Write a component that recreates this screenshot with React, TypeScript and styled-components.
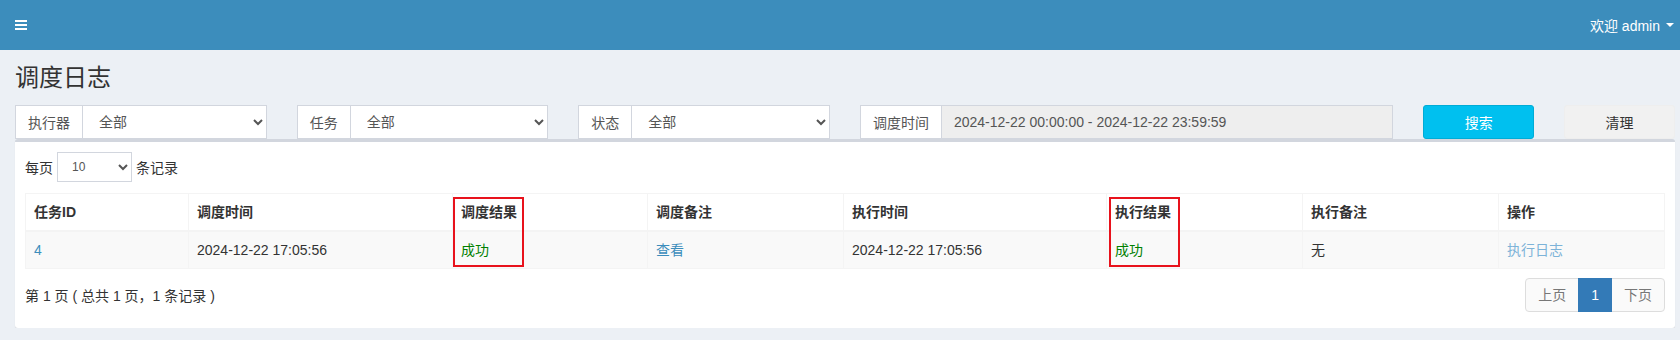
import React from 'react';
import styled, { createGlobalStyle } from 'styled-components';

const GlobalStyle = createGlobalStyle`
    * {
        box-sizing: border-box;
    }
    body {
        margin: 0;
        background: #ecf0f5;
        font-family: "Liberation Sans", "Noto Sans CJK SC", sans-serif;
        font-size: 14px;
        color: #333;
    }
`;

const Navbar = styled.header`
    height: 50px;
    background: #3c8dbc;
    display: flex;
    align-items: center;
    justify-content: space-between;
    padding: 0 6px 0 15px;
    color: #fff;
`;

const UserMenu = styled.div`
    display: flex;
    align-items: center;
    gap: 6px;
    font-size: 14px;
    margin-top: -1px;
`;

const Caret = styled.span`
    width: 0;
    height: 0;
    border-left: 4px solid transparent;
    border-right: 4px solid transparent;
    border-top: 4px solid #fff;
`;

const ContentHeader = styled.div`
    padding: 15px 15px 0;
`;

const Title = styled.h1`
    margin: 0;
    font-size: 24px;
    line-height: 25px;
    font-weight: 400;
    color: #333;
`;

const Content = styled.section`
    padding: 15px 5px 0 15px;
`;

const FilterRow = styled.div`
    display: flex;
    margin: 0 -15px;
`;

const Col = styled.div<{ $span: number }>`
    width: ${(p) => (p.$span / 12) * 100}%;
    padding: 0 15px;
`;

const InputGroup = styled.div`
    display: flex;
    height: 34px;
`;

const Addon = styled.span`
    display: flex;
    align-items: center;
    padding: 6px 12px;
    border: 1px solid #d2d6de;
    background: #fff;
    color: #555;
    white-space: nowrap;
`;

const Select = styled.select`
    flex: 1;
    min-width: 0;
    height: 34px;
    padding: 6px 8px 6px 12px;
    border: 1px solid #d2d6de;
    border-left: 0;
    border-radius: 0;
    background: #fff;
    color: #555;
    font-family: inherit;
    font-size: 14px;
    outline: none;
`;

const TimeInput = styled.input`
    flex: 1;
    min-width: 0;
    height: 34px;
    padding: 6px 12px;
    border: 1px solid #d2d6de;
    border-left: 0;
    background: #eee;
    color: #555;
    font-family: inherit;
    font-size: 14px;
    outline: none;
`;

const Button = styled.button<{ $primary?: boolean }>`
    width: 100%;
    height: 34px;
    border-radius: 3px;
    border: 1px solid ${(p) => (p.$primary ? '#00acd6' : '#eee')};
    background: ${(p) => (p.$primary ? '#00c0ef' : '#f1f1f1')};
    color: ${(p) => (p.$primary ? '#fff' : '#333')};
    font-family: inherit;
    font-size: 14px;
`;

const Box = styled.div`
    background: #fff;
    border-top: 3px solid #d2d6de;
    border-radius: 3px;
    box-shadow: 0 1px 1px rgba(0, 0, 0, 0.1);
`;

const BoxBody = styled.div`
    padding: 10px;
`;

const LengthRow = styled.div`
    display: flex;
    align-items: center;
    gap: 4px;
`;

const SmallSelect = styled.select`
    width: 75px;
    height: 30px;
    padding: 5px 10px;
    border: 1px solid #d2d6de;
    border-radius: 0;
    background: #fff;
    color: #555;
    font-family: inherit;
    font-size: 12px;
    outline: none;
`;

const Table = styled.table`
    width: 100%;
    margin-top: 11px;
    border-collapse: collapse;
    table-layout: fixed;
    border: 1px solid #f4f4f4;
`;

const Th = styled.th`
    position: relative;
    text-align: left;
    padding: 8px;
    line-height: 20px;
    font-weight: 700;
    color: #333;
    border: 1px solid #f4f4f4;
    border-bottom-width: 2px;
`;

const Td = styled.td`
    padding: 8px;
    line-height: 20px;
    background: #f9f9f9;
    border: 1px solid #f4f4f4;
`;

const Link = styled.a<{ $faded?: boolean }>`
    color: ${(p) => (p.$faded ? '#7db3d8' : '#3c8dbc')};
    text-decoration: none;
`;

const Success = styled.span`
    color: #008000;
`;

const Highlight = styled.span<{ $left: number }>`
    position: absolute;
    top: 3px;
    left: ${(p) => p.$left}px;
    width: 71px;
    height: 70px;
    border: 2px solid #e8121c;
    pointer-events: none;
`;

const Footer = styled.div`
    display: flex;
    align-items: center;
    justify-content: space-between;
    margin-top: 9px;
    margin-bottom: 6px;
`;

const Pagination = styled.ul`
    display: flex;
    margin: 0;
    padding: 0;
    list-style: none;
`;

const PageItem = styled.li<{ $active?: boolean }>`
    padding: 6px 12px;
    line-height: 20px;
    margin-left: -1px;
    border: 1px solid ${(p) => (p.$active ? '#337ab7' : '#ddd')};
    background: ${(p) => (p.$active ? '#337ab7' : '#fafafa')};
    color: ${(p) => (p.$active ? '#fff' : '#777')};
    position: ${(p) => (p.$active ? 'relative' : 'static')};

    &:first-child {
        margin-left: 0;
        border-radius: 4px 0 0 4px;
    }
    &:last-child {
        border-radius: 0 4px 4px 0;
    }
`;

function Bars() {
    return (
        <svg width="12" height="10" viewBox="0 0 12 10">
            <rect x="0" y="0" width="12" height="2" fill="#fff" />
            <rect x="0" y="4" width="12" height="2" fill="#fff" />
            <rect x="0" y="8" width="12" height="2" fill="#fff" />
        </svg>
    );
}

const columns = [
    { title: '任务ID', width: 163 },
    { title: '调度时间', width: 264 },
    { title: '调度结果', width: 195, mark: 0 },
    { title: '调度备注', width: 196 },
    { title: '执行时间', width: 263 },
    { title: '执行结果', width: 196, mark: 2 },
    { title: '执行备注', width: 196 },
    { title: '操作', width: 166 },
];

function App() {
    return (
        <>
            <GlobalStyle />
            <Navbar>
                <Bars />
                <UserMenu>
                    欢迎 admin <Caret />
                </UserMenu>
            </Navbar>
            <ContentHeader>
                <Title>调度日志</Title>
            </ContentHeader>
            <Content>
                <FilterRow>
                    <Col $span={2}>
                        <InputGroup>
                            <Addon>执行器</Addon>
                            <Select defaultValue="all">
                                <option value="all">全部</option>
                            </Select>
                        </InputGroup>
                    </Col>
                    <Col $span={2}>
                        <InputGroup>
                            <Addon>任务</Addon>
                            <Select defaultValue="all">
                                <option value="all">全部</option>
                            </Select>
                        </InputGroup>
                    </Col>
                    <Col $span={2}>
                        <InputGroup>
                            <Addon>状态</Addon>
                            <Select defaultValue="all">
                                <option value="all">全部</option>
                            </Select>
                        </InputGroup>
                    </Col>
                    <Col $span={4}>
                        <InputGroup>
                            <Addon>调度时间</Addon>
                            <TimeInput readOnly value="2024-12-22 00:00:00 - 2024-12-22 23:59:59" />
                        </InputGroup>
                    </Col>
                    <Col $span={1}>
                        <Button $primary>搜索</Button>
                    </Col>
                    <Col $span={1}>
                        <Button>清理</Button>
                    </Col>
                </FilterRow>
                <Box>
                    <BoxBody>
                        <LengthRow>
                            每页
                            <SmallSelect defaultValue="10">
                                <option value="10">10</option>
                            </SmallSelect>
                            条记录
                        </LengthRow>
                        <Table>
                            <thead>
                                <tr>
                                    {columns.map((c) => (
                                        <Th key={c.title} style={{ width: c.width }}>
                                            {c.title}
                                            {c.mark !== undefined && <Highlight $left={c.mark} />}
                                        </Th>
                                    ))}
                                </tr>
                            </thead>
                            <tbody>
                                <tr>
                                    <Td><Link>4</Link></Td>
                                    <Td>2024-12-22 17:05:56</Td>
                                    <Td><Success>成功</Success></Td>
                                    <Td><Link>查看</Link></Td>
                                    <Td>2024-12-22 17:05:56</Td>
                                    <Td><Success>成功</Success></Td>
                                    <Td>无</Td>
                                    <Td><Link $faded>执行日志</Link></Td>
                                </tr>
                            </tbody>
                        </Table>
                        <Footer>
                            <span>第 1 页 ( 总共 1 页，1 条记录 )</span>
                            <Pagination>
                                <PageItem>上页</PageItem>
                                <PageItem $active>1</PageItem>
                                <PageItem>下页</PageItem>
                            </Pagination>
                        </Footer>
                    </BoxBody>
                </Box>
            </Content>
        </>
    );
}

export default App;
